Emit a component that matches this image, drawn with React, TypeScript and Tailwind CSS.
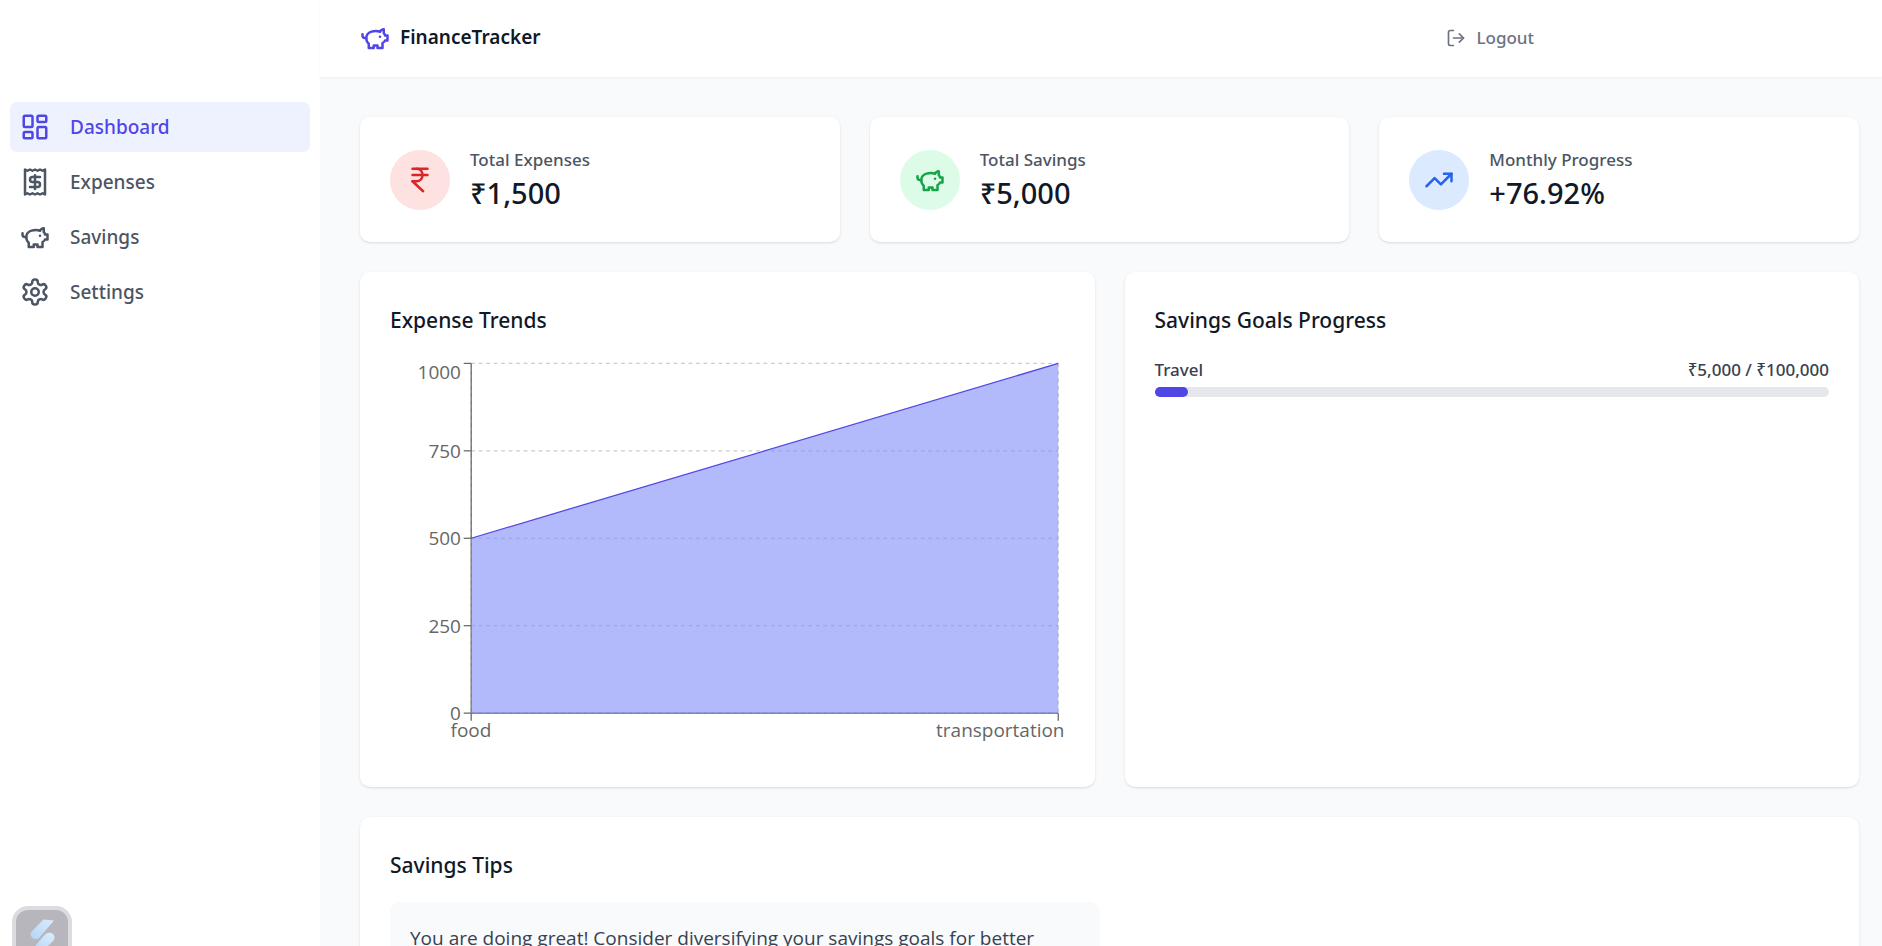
import type { ReactNode } from "react";
import { IndianRupee, LayoutDashboard, LogOut, Receipt, TrendingUp } from "lucide-react";

function PiggyBank({ className }: { className?: string }) {
  return (
    <svg viewBox="0 0 24 24" fill="none" stroke="currentColor" strokeWidth="2" strokeLinecap="round" strokeLinejoin="round" className={className} aria-hidden="true">
      <path d="M19 5c-1.5 0-2.8 1.4-3 2-3.5-1.5-11-.3-11 5 0 1.8 0 3 2 4.5V20h4v-2h3v2h4v-4c1-.5 1.7-1 2-2h2v-4h-2c0-1-.5-1.5-1-2V5z" />
      <path d="M2 9v1c0 1.1.9 2 2 2h1" />
      <path d="M16 11h.01" />
    </svg>
  );
}

function Gear({ className }: { className?: string }) {
  return (
    <svg viewBox="0 0 24 24" fill="none" stroke="currentColor" strokeWidth="2" strokeLinecap="round" strokeLinejoin="round" className={className} aria-hidden="true">
      <path d="M12.22 2h-.44a2 2 0 0 0-2 2v.18a2 2 0 0 1-1 1.73l-.43.25a2 2 0 0 1-2 0l-.15-.08a2 2 0 0 0-2.73.73l-.22.38a2 2 0 0 0 .73 2.73l.15.1a2 2 0 0 1 1 1.72v.51a2 2 0 0 1-1 1.74l-.15.09a2 2 0 0 0-.73 2.73l.22.38a2 2 0 0 0 2.73.73l.15-.08a2 2 0 0 1 2 0l.43.25a2 2 0 0 1 1 1.73V20a2 2 0 0 0 2 2h.44a2 2 0 0 0 2-2v-.18a2 2 0 0 1 1-1.73l.43-.25a2 2 0 0 1 2 0l.15.08a2 2 0 0 0 2.73-.73l.22-.39a2 2 0 0 0-.73-2.73l-.15-.08a2 2 0 0 1-1-1.74v-.5a2 2 0 0 1 1-1.74l.15-.09a2 2 0 0 0 .73-2.73l-.22-.38a2 2 0 0 0-2.73-.73l-.15.08a2 2 0 0 1-2 0l-.43-.25a2 2 0 0 1-1-1.73V4a2 2 0 0 0-2-2z" />
      <circle cx="12" cy="12" r="3" />
    </svg>
  );
}

const navItems = [
  { label: "Dashboard", icon: <LayoutDashboard className="size-[30px]" />, active: true },
  { label: "Expenses", icon: <Receipt className="size-[30px]" />, active: false },
  { label: "Savings", icon: <PiggyBank className="size-[30px]" />, active: false },
  { label: "Settings", icon: <Gear className="size-[30px]" />, active: false },
];

function Sidebar() {
  return (
    <aside className="flex w-80 shrink-0 flex-col justify-between bg-white">
      <nav className="flex flex-col gap-[5px] px-[10px] pt-[102px]">
        {navItems.map((item) => (
          <a
            key={item.label}
            href="#"
            aria-current={item.active ? "page" : undefined}
            className={`flex h-[50px] items-center gap-5 rounded-[7px] px-[10px] text-[19px] font-medium ${item.active ? "bg-[#eef2ff] text-[#4f46e5]" : "text-[#4b5563]"}`}
          >
            {item.icon}
            {item.label}
          </a>
        ))}
      </nav>
      <div className="-mb-5 ml-3 flex size-[60px] items-center justify-center rounded-2xl border-4 border-[#dcdce0] bg-[#b6b6bc]">
        <svg viewBox="0 0 52 52" className="size-[52px]" aria-hidden="true">
          <defs>
            <linearGradient id="badge" x1="1" y1="0" x2="0" y2="1">
              <stop offset="0" stopColor="#dcecfc" />
              <stop offset="1" stopColor="#b3d5f7" />
            </linearGradient>
          </defs>
          <path d="M27.500 9.500L38 10.500L23.500 27.500C21.500 29.500 18 29.500 16 27.500C14 25.500 14 23 16 21Z" fill="url(#badge)" />
          <path d="M25 42.500L14.500 41.500L29 24.500C31 22.500 35 22 37 24C39 26 39 29 37 31Z" fill="url(#badge)" />
        </svg>
      </div>
    </aside>
  );
}

function Header() {
  return (
    <header className="bg-white shadow-xs">
      <div className="flex h-[77px] max-w-[1214px] items-center justify-between pb-0.5 pl-10">
        <a href="#" className="flex items-center gap-[10px] text-[19px] font-semibold text-[#111827]">
          <PiggyBank className="size-[30px] text-[#4f46e5]" />
          FinanceTracker
        </a>
        <button type="button" className="flex items-center gap-[10px] text-[17px] font-medium text-[#6b7280]">
          <LogOut className="size-5" />
          Logout
        </button>
      </div>
    </header>
  );
}

function Card({ className = "", children }: { className?: string; children: ReactNode }) {
  return <section className={`rounded-[10px] bg-white p-[30px] shadow-sm ${className}`}>{children}</section>;
}

function Stat({ icon, tone, label, value }: { icon: ReactNode; tone: string; label: string; value: string }) {
  return (
    <Card className="flex items-center gap-5">
      <div className={`flex size-[60px] items-center justify-center rounded-full ${tone}`}>{icon}</div>
      <div>
        <p className="text-[17px] leading-[26px] font-medium text-[#4b5563]">{label}</p>
        <p className="text-[29px] leading-[39px] font-medium text-[#111827]">{value}</p>
      </div>
    </Card>
  );
}

function Title({ children }: { children: ReactNode }) {
  return <h2 className="mb-[18px] text-[21px] leading-[37px] font-medium text-[#111827]">{children}</h2>;
}

const ticks = [
  { value: 1000, y: 6.25, label: 22 },
  { value: 750, y: 93.75, label: 101 },
  { value: 500, y: 181.25, label: 188 },
  { value: 250, y: 268.75, label: 276 },
  { value: 0, y: 356.25, label: 363 },
];

function ExpenseChart() {
  return (
    <svg viewBox="0 0 675 400" className="h-[400px] w-full font-['Open_Sans','Noto_Sans',sans-serif] text-[19px]" role="img" aria-label="Expense trends by category">
      <g stroke="#ccc" strokeWidth="1.25" strokeDasharray="3.75 3.75">
        {ticks.map((t) => (
          <line key={t.value} x1="81.25" x2="668.75" y1={t.y} y2={t.y} />
        ))}
        <line x1="81.25" x2="81.25" y1="6.25" y2="356.25" />
        <line x1="668.75" x2="668.75" y1="6.25" y2="356.25" />
      </g>
      <g stroke="#666" strokeWidth="1.25">
        <line x1="81.25" x2="668.75" y1="356.25" y2="356.25" />
        <line x1="81.25" x2="81.25" y1="6.25" y2="356.25" />
        {ticks.map((t) => (
          <line key={t.value} x1="73.75" x2="81.25" y1={t.y} y2={t.y} />
        ))}
        <line x1="81.25" x2="81.25" y1="356.25" y2="363.75" />
        <line x1="668.75" x2="668.75" y1="356.25" y2="363.75" />
      </g>
      <path d="M81.250 181.250L668.750 6.250V356.250H81.250Z" fill="#818cf8" fillOpacity="0.6" />
      <path d="M81.250 181.250L668.750 6.250" fill="none" stroke="#4f46e5" strokeWidth="1.25" />
      <g fill="#666">
        {ticks.map((t) => (
          <text key={t.value} x="71" y={t.label} textAnchor="end">
            {t.value}
          </text>
        ))}
        <text x="81" y="380" textAnchor="middle">food</text>
        <text x="675" y="380" textAnchor="end">transportation</text>
      </g>
    </svg>
  );
}

export default function App() {
  return (
    <div className="flex h-screen overflow-hidden bg-[#f9fafb] font-['Noto_Sans','Open_Sans',sans-serif]">
      <Sidebar />
      <div className="min-w-0 flex-1">
        <Header />
        <main className="flex flex-col gap-[30px] pt-10 pr-[23px] pl-10">
          <div className="grid grid-cols-3 gap-[30px]">
            <Stat icon={<IndianRupee className="size-[30px] text-[#dc2626]" />} tone="bg-[#fee2e2]" label="Total Expenses" value="₹1,500" />
            <Stat icon={<PiggyBank className="size-[30px] text-[#16a34a]" />} tone="bg-[#dcfce7]" label="Total Savings" value="₹5,000" />
            <Stat icon={<TrendingUp className="size-[30px] text-[#2563eb]" />} tone="bg-[#dbeafe]" label="Monthly Progress" value="+76.92%" />
          </div>
          <div className="grid grid-cols-2 gap-[30px]">
            <Card>
              <Title>Expense Trends</Title>
              <ExpenseChart />
            </Card>
            <Card>
              <Title>Savings Goals Progress</Title>
              <div className="flex justify-between text-[17px] leading-[26px] font-medium text-[#374151]">
                <span>Travel</span>
                <span>₹5,000 / ₹100,000</span>
              </div>
              <div className="mt-1 h-[10px] rounded-full bg-[#e5e7eb]">
                <div className="h-full w-[5%] rounded-full bg-[#4f46e5]" />
              </div>
            </Card>
          </div>
          <Card>
            <Title>Savings Tips</Title>
            <div className="grid grid-cols-2 gap-5">
              <p className="rounded-[10px] bg-[#f9fafb] p-5 font-['Open_Sans','Noto_Sans',sans-serif] text-[19px] leading-8 text-[#374151]">
                You are doing great! Consider diversifying your savings goals for better
              </p>
            </div>
          </Card>
        </main>
      </div>
    </div>
  );
}
